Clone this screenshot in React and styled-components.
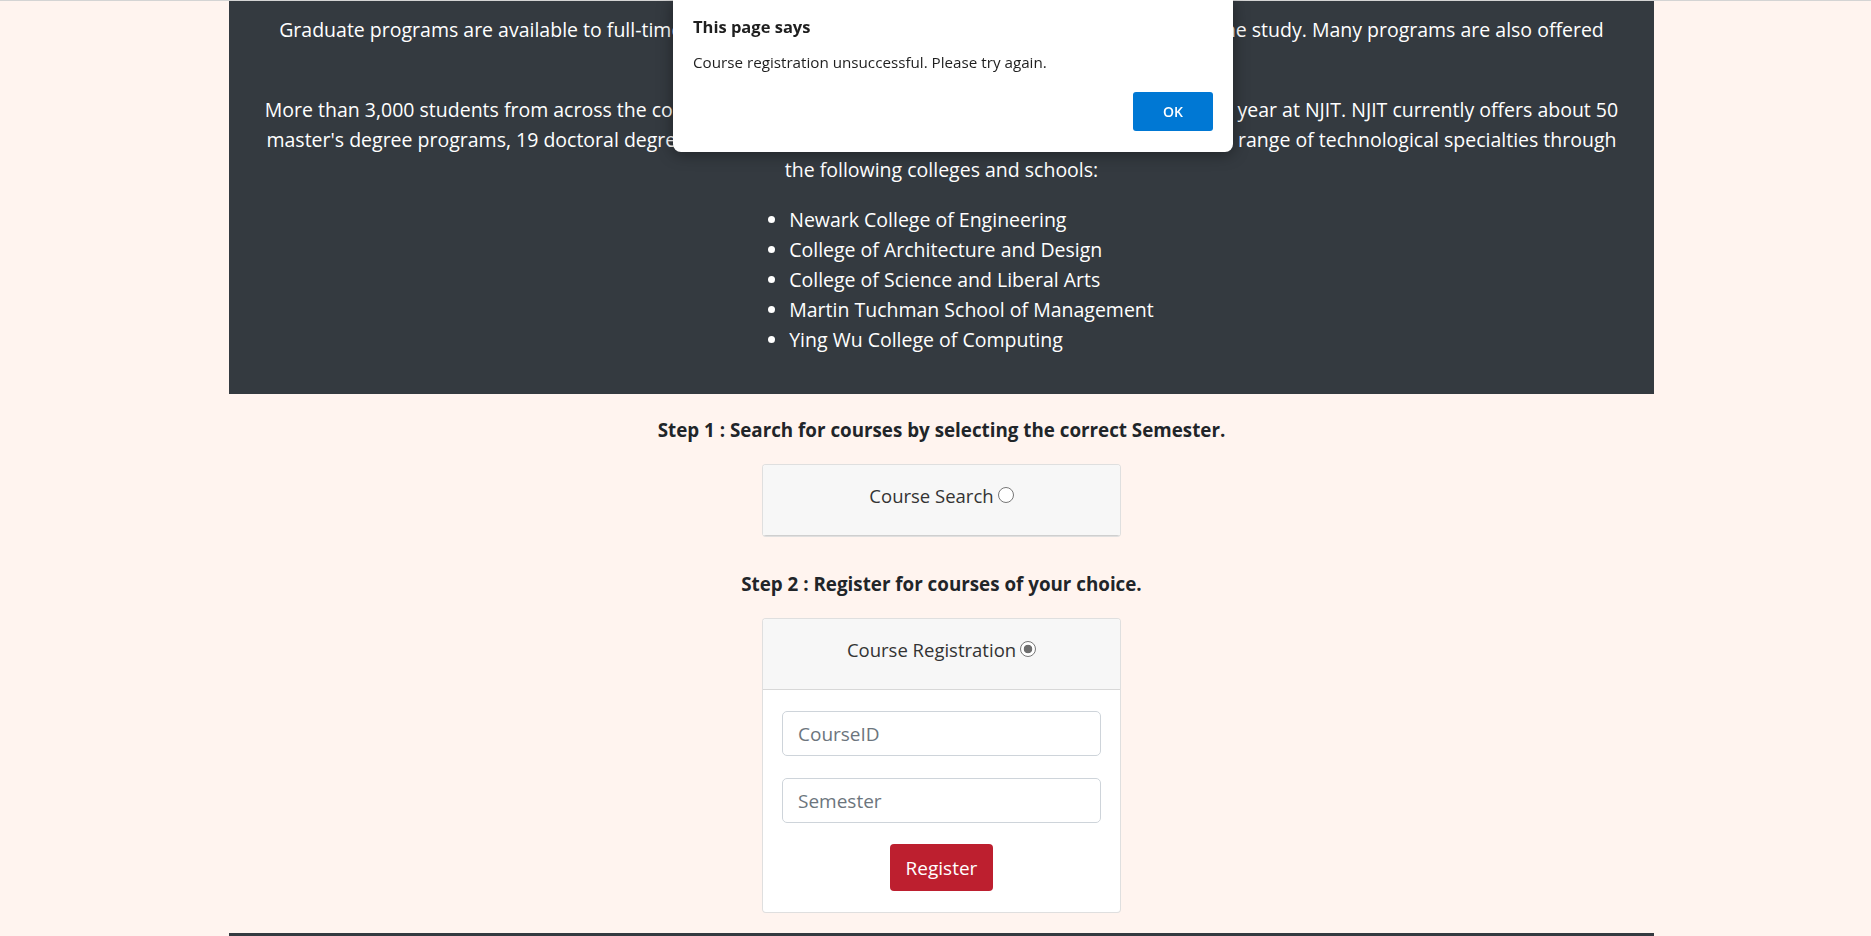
import styled, { createGlobalStyle } from 'styled-components';

const colleges = [
  'Newark College of Engineering',
  'College of Architecture and Design',
  'College of Science and Liberal Arts',
  'Martin Tuchman School of Management',
  'Ying Wu College of Computing',
];

export default function App() {
  return (
    <>
      <GlobalStyle />
      <Page>
        <InfoPanel>
          <Intro>
            Graduate programs are available to full-time students, as well as to those who prefer to pursue a part-time study. Many programs are also offered
            <br />
            online.
          </Intro>
          <Intro>
            More than 3,000 students from across the country and around the world enroll in graduate programs each year at NJIT. NJIT currently offers about 50
            <br />
            master's degree programs, 19 doctoral degree programs, and 25 graduate certificate programs in the wide range of technological specialties through
            <br />
            the following colleges and schools:
          </Intro>
          <CollegeList>
            {colleges.map(c => (
              <li key={c}>{c}</li>
            ))}
          </CollegeList>
        </InfoPanel>

        <Steps>
          <StepTitle>Step 1 : Search for courses by selecting the correct Semester.</StepTitle>
          <Card $gap="32px">
            <CardHeader $closed>
              Course Search <Radio type="radio" name="mode" />
            </CardHeader>
          </Card>

          <StepTitle>Step 2 : Register for courses of your choice.</StepTitle>
          <Card $gap="20px">
            <CardHeader>
              Course Registration <Radio type="radio" name="mode" defaultChecked />
            </CardHeader>
            <CardBody>
              <Field type="text" placeholder="CourseID" />
              <Field type="text" placeholder="Semester" />
              <RegisterButton type="button">Register</RegisterButton>
            </CardBody>
          </Card>
        </Steps>

        <Footer />
      </Page>

      <Dialog>
        <DialogTitle>This page says</DialogTitle>
        <DialogText>Course registration unsuccessful. Please try again.</DialogText>
        <DialogActions>
          <OkButton type="button">OK</OkButton>
        </DialogActions>
      </Dialog>
    </>
  );
}

const GlobalStyle = createGlobalStyle`
  html, body {
    margin: 0;
    padding: 0;
  }
  body {
    background: #fff4ef;
    border-top: 1px solid #d4d4d4;
    font-family: 'Open Sans', Lato, sans-serif;
    color: #212529;
  }
`;

const Page = styled.div`
  padding: 0 217px 0 229px;
`;

const InfoPanel = styled.section`
  background: #343a40;
  color: #ffffff;
  text-align: center;
  padding: 14px 20px 39px;
  font-size: 19.5px;
  line-height: 30px;
`;

const Intro = styled.p`
  margin: 0 0 20px;
`;

const CollegeList = styled.ul`
  display: inline-block;
  text-align: left;
  margin: 0 0 0 20px;
  padding-left: 40px;
`;

const Steps = styled.div`
  display: flex;
  flex-direction: column;
  align-items: center;
  padding-top: 21px;
`;

const StepTitle = styled.h2`
  margin: 0 0 19px;
  font-size: 18.8px;
  line-height: 30px;
  font-weight: 700;
  color: #212529;
`;

const Card = styled.div`
  width: 359px;
  box-sizing: border-box;
  background: #ffffff;
  border: 1px solid rgba(0, 0, 0, 0.125);
  border-radius: 4px;
  overflow: hidden;
  margin-bottom: ${p => p.$gap};
`;

const CardHeader = styled.div`
  display: flex;
  align-items: center;
  justify-content: center;
  gap: 4px;
  height: 71px;
  box-sizing: border-box;
  padding-bottom: 9px;
  background: #f7f7f7;
  font-size: 18.5px;
  line-height: 30px;
  color: #333333;
  border-bottom: 1px solid rgba(0, 0, 0, ${p => (p.$closed ? 0.16 : 0.125)});
`;

const Radio = styled.input`
  appearance: none;
  flex: none;
  width: 16px;
  height: 16px;
  margin: 0 0 2px;
  border: 1px solid #777777;
  border-radius: 50%;
  background: #ffffff;
  box-sizing: border-box;

  &:checked {
    border: 1.5px solid #777777;
    background: radial-gradient(circle, #6e6e6e 0 4px, #ffffff 4.6px);
  }
`;

const CardBody = styled.div`
  display: flex;
  flex-direction: column;
  align-items: center;
  gap: 22px;
  padding: 21px 19px;
`;

const Field = styled.input`
  width: 100%;
  height: 45px;
  box-sizing: border-box;
  padding: 0 15px;
  font-family: inherit;
  font-size: 19px;
  color: #495057;
  background: #ffffff;
  border: 1px solid #ced4da;
  border-radius: 5px;
  outline: none;

  &::placeholder {
    color: #6c757d;
  }
`;

const RegisterButton = styled.button`
  margin-top: -1px;
  width: 103px;
  height: 47px;
  padding: 0;
  font-family: inherit;
  font-size: 19px;
  color: #ffffff;
  background: #bd1f2f;
  border: none;
  border-radius: 4px;
  cursor: pointer;
`;

const Footer = styled.footer`
  height: 24px;
  background: #343a40;
`;

const Dialog = styled.div`
  position: fixed;
  top: 0;
  left: 673px;
  width: 560px;
  height: 152px;
  box-sizing: border-box;
  padding: 16px 20px 21px;
  background: #ffffff;
  border-radius: 0 0 8px 8px;
  box-shadow: 0 2px 16px rgba(0, 0, 0, 0.4);
  display: flex;
  flex-direction: column;
  color: #1f1f1f;
`;

const DialogTitle = styled.div`
  font-size: 16.5px;
  line-height: 22px;
  font-weight: 700;
`;

const DialogText = styled.div`
  margin-top: 14px;
  font-size: 15.2px;
  line-height: 20px;
`;

const DialogActions = styled.div`
  margin-top: auto;
  display: flex;
  justify-content: flex-end;
`;

const OkButton = styled.button`
  width: 80px;
  height: 39px;
  font-family: inherit;
  font-size: 14px;
  font-weight: 600;
  color: #ffffff;
  background: #0078d4;
  border: none;
  border-radius: 3px;
`;
